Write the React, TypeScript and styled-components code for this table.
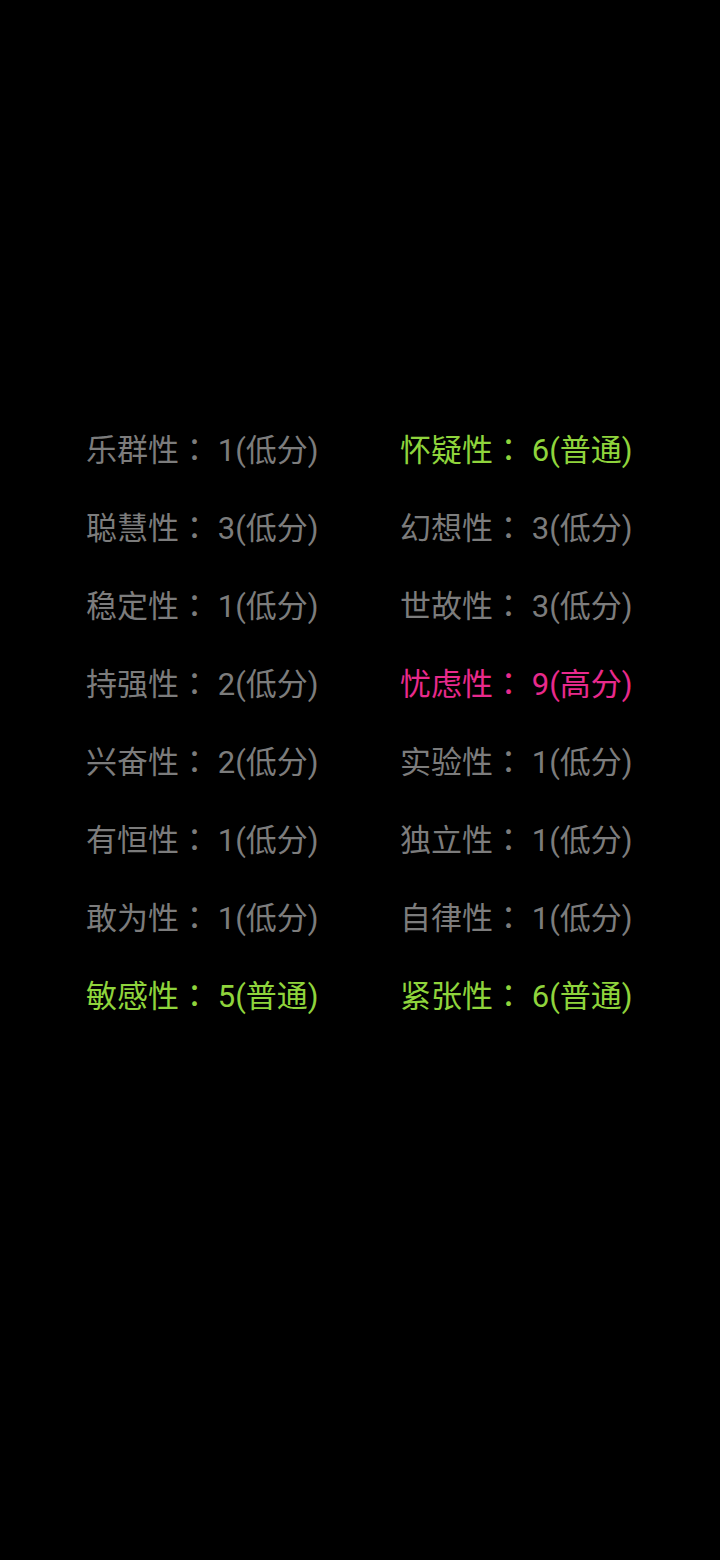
import React from "react";
import styled, { createGlobalStyle } from "styled-components";

const Global = createGlobalStyle`
  html, body { margin: 0; padding: 0; background: #000; }
  body { font-family: Roboto, "Noto Sans CJK SC", sans-serif; }
`;

const Page = styled.div`
  width: 720px;
  height: 1560px;
  background: #000;
  box-sizing: border-box;
  padding-top: 409px;
  padding-left: 86px;
`;

const Grid = styled.div`
  display: grid;
  grid-template-columns: 314px 314px;
  grid-auto-rows: 78px;
`;

type Level = "low" | "normal" | "high";

const colors: Record<Level, string> = {
  low: "#7c7c7c",
  normal: "#8fd43c",
  high: "#e82a8c",
};

const Item = styled.div<{ $level: Level }>`
  font-family: Roboto, "Noto Sans CJK SC", sans-serif;
  font-size: 31px;
  line-height: 78px;
  white-space: nowrap;
  color: ${(p) => colors[p.$level]};
`;

const Colon = styled.span`
  font-family: "Noto Sans CJK TC", sans-serif;
`;

const data: [string, number, Level][] = [
  ["乐群性", 1, "low"],
  ["怀疑性", 6, "normal"],
  ["聪慧性", 3, "low"],
  ["幻想性", 3, "low"],
  ["稳定性", 1, "low"],
  ["世故性", 3, "low"],
  ["持强性", 2, "low"],
  ["忧虑性", 9, "high"],
  ["兴奋性", 2, "low"],
  ["实验性", 1, "low"],
  ["有恒性", 1, "low"],
  ["独立性", 1, "low"],
  ["敢为性", 1, "low"],
  ["自律性", 1, "low"],
  ["敏感性", 5, "normal"],
  ["紧张性", 6, "normal"],
];

const label: Record<Level, string> = { low: "低分", normal: "普通", high: "高分" };

export default function App() {
  return (
    <>
      <Global />
      <Page>
        <Grid>
          {data.map(([name, score, level]) => (
            <Item key={name} $level={level}>
              {name}
              <Colon>：</Colon> {score}({label[level]})
            </Item>
          ))}
        </Grid>
      </Page>
    </>
  );
}
